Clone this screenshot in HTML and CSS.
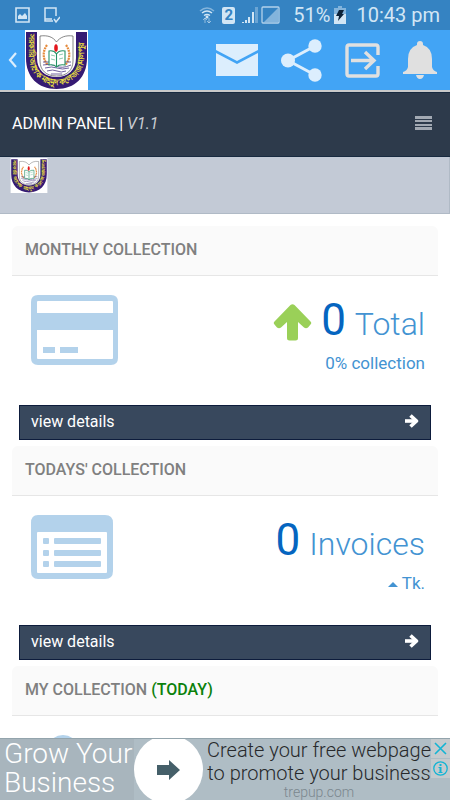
FILE: index.html
```html
<!DOCTYPE html>
<html lang="en">
<head>
<meta charset="utf-8">
<meta name="viewport" content="width=device-width, initial-scale=1">
<title>Admin Panel</title>
<link rel="stylesheet" href="styles.css">
</head>
<body>
<svg class="defs" aria-hidden="true">
  <defs>
    <path id="crest-arc" d="M4 4V28A27.500 27 0 0 0 59 28V3"/>
    <symbol id="crest" viewBox="0 0 63 60">
      <path fill="#fff" d="M0 0h63v60H0z"/>
      <path fill="#351a73" d="M1 2h11v26c0 12 8 19 19.500 19S51 40 51 28V2h11v26c0 19-12 31-30.500 31S1 47 1 28z"/>
      <path fill="#fff" stroke="#555" stroke-width=".7" d="M15 6c8-1 13 1 16.500 6C35 7 41 5 48 6v25c0 9-6 15-16.500 15S15 40 15 31z"/>
      <path fill="none" stroke="#e58a3c" stroke-width="2.200" stroke-dasharray="2 .7" d="M22 15c-5 7-4 15 1 20M41 15c5 7 4 15-1 20"/>
      <path fill="none" stroke="#4b3a86" stroke-width=".8" d="M18 32h8m11 0h9M18 35q7-2 13 1t15-1M20 38q7-2 12 0t12 0M22 41q6-2 10 0t9 0M26 44h11"/>
      <path fill="#fff" stroke="#259064" stroke-width="1.100" d="M24 21q5-1 7.500 3Q34 20 40 21v14q-6-1-8.500 2Q29 34 24 35zM31.500 24v13"/>
      <path stroke="#5bb58d" stroke-width=".7" d="M26 25l4 1m-4 3l4 1m4-5l4-1m-4 5l4-1"/>
      <ellipse fill="#e3161c" cx="31" cy="18" rx="1.800" ry="3.800"/>
      <text class="crest-text"><textPath href="#crest-arc" startOffset="0">সরকারি আশেক মাহমুদ কলেজ জামালপুর</textPath></text>
    </symbol>
    <symbol id="arrow-right" viewBox="0 0 14 14">
      <path fill="none" stroke="currentColor" stroke-width="3.600" d="M0 7h11"/>
      <path fill="none" stroke="currentColor" stroke-width="3.600" stroke-linejoin="round" d="M5.500 1.500L11.500 7l-6 5.500"/>
    </symbol>
  </defs>
</svg>

<div class="status-bar">
  <div class="status-left">
    <svg width="15" height="16" viewBox="0 0 15 16"><path fill="none" stroke="currentColor" stroke-width="1.600" d="M1 1h13v14H1z"/><path fill="currentColor" d="M3 12V9l2-2 2 2 3-3 2 3v3z"/></svg>
    <svg width="16" height="17" viewBox="0 0 16 17"><path fill="none" stroke="currentColor" stroke-width="1.500" d="M12 9V1H1v13h8M1 12h7M10 12l2 3 4-5"/></svg>
  </div>
  <div class="status-right">
    <svg width="16" height="18" viewBox="0 0 16 18"><path fill="none" stroke="currentColor" stroke-width="1.500" d="M1 5q7-6 14 0" opacity=".5"/><path fill="none" stroke="currentColor" stroke-width="1.500" d="M3 7q5-4 10 0M5 9.500q3-2 6 0"/><circle fill="currentColor" cx="8" cy="11" r="1.500"/><path fill="none" stroke="currentColor" opacity=".6" d="M6 17v-5m-2 2l2-2 2 2m2-2v5m-2-2l2 2 2-2"/></svg>
    <span class="sim">2</span>
    <svg width="38" height="18" viewBox="0 0 38 18"><path fill="currentColor" d="M0 16h2v1H0zM3 14h2v3H3zM6 11h2v6H6zM10 6h2v11h-2z"/><path fill="currentColor" opacity=".35" d="M13 1h3v16h-3z"/><rect x="20" y="1" width="17" height="16" rx="1" fill="none" stroke="currentColor" stroke-width="1.300" opacity=".8"/><path fill="currentColor" opacity=".5" d="M36 2v14H22z"/></svg>
    <span class="percent">51%</span>
    <svg width="12" height="18" viewBox="0 0 12 18"><path fill="currentColor" opacity=".5" d="M4 0h4v2h4v8H0V2h4z"/><path fill="currentColor" d="M0 8h12v10H0z"/><path fill="#0c2238" d="M5 4h5L8 8h2l-6 7 1-5H2z"/></svg>
    <span class="clock">10:43 pm</span>
  </div>
</div>

<header class="app-bar">
  <button class="icon-button back" aria-label="Back"><svg width="9" height="16" viewBox="0 0 9 16"><path fill="none" stroke="currentColor" stroke-width="2.200" d="M8 1L2 8l6 7"/></svg></button>
  <svg class="app-logo" role="img" aria-label="College crest"><use href="#crest"/></svg>
  <nav class="app-actions">
    <button class="icon-button" aria-label="Mail"><svg width="42" height="32" viewBox="0 0 42 32"><path fill="currentColor" d="M0 0h42v6L21 17 0 6zM0 9l21 11L42 9v23H0z"/></svg></button>
    <button class="icon-button" aria-label="Share"><svg width="41" height="43" viewBox="0 0 41 43"><path fill="none" stroke="currentColor" stroke-width="3" d="M34 7L7 21.500 34 36"/><g fill="currentColor"><circle cx="34" cy="7" r="6.700"/><circle cx="7" cy="21.500" r="7"/><circle cx="34" cy="36" r="6.700"/></g></svg></button>
    <button class="icon-button grey" aria-label="Log out"><svg width="35" height="35" viewBox="0 0 35 35"><path fill="none" stroke="currentColor" stroke-width="3.400" d="M33 12V4q0-2-2-2H4Q2 2 2 4v27q0 2 2 2h27q2 0 2-2v-8M6 17.500h23M20 9l9 8.500-9 8.500"/></svg></button>
    <button class="icon-button grey" aria-label="Notifications"><svg width="34" height="38" viewBox="0 0 34 38"><path fill="currentColor" d="M14 3a3 3 0 0 1 6 0v1q9 3 9 14v8q1 4 5 5v2H0v-2q4-1 5-5v-8Q5 7 14 4zM13 34h8q-1 4-4 4t-4-4z"/></svg></button>
  </nav>
</header>

<div class="panel-bar">
  <h1>ADMIN PANEL | <em>V1.1</em></h1>
  <button class="icon-button menu" aria-label="Menu"><svg width="17" height="14" viewBox="0 0 17 14"><path fill="currentColor" d="M0 0h17v3H0zM0 4h17v2H0zM0 8h17v2H0zM0 11h17v3H0z"/></svg></button>
</div>
<div class="sub-bar"><svg class="sub-logo" role="img" aria-label="College crest"><use href="#crest"/></svg></div>

<main>
  <section class="card">
    <h2>MONTHLY COLLECTION</h2>
    <div class="card-body">
      <svg width="88" height="70" viewBox="0 0 88 70"><path fill="#b3d2eb" fill-rule="evenodd" d="M7 0h73q7 0 7 7v56q0 7-7 7H7q-7 0-7-7V7q0-7 7-7zM7 6q-1 0-1 1v11h76V7q0-1-1-1zM6 35v28q0 1 1 1h74q1 0 1-1V35zM12 52h12v6H12zM29 52h18v6H29z"/></svg>
      <div class="figures">
        <p class="headline"><svg class="up" width="39" height="37" viewBox="0 0 39 37"><path fill="#9ad058" d="M17.500 1q2-1.500 4 0L37.500 17.500q1.500 1.500 0 3L35 23.500q-2 1.500-4 0L25 18v16q0 2.500-2.500 2.500h-6Q14 36.500 14 34V18l-6 5.500q-2 1.500-4 0l-2.500-3q-1.500-1.500 0-3z"/></svg><strong>0</strong> Total</p>
        <p class="detail">0% collection</p>
      </div>
    </div>
    <a class="view" href="#monthly">view details <svg width="14" height="14"><use href="#arrow-right"/></svg></a>
  </section>
  <section class="card">
    <h2>TODAYS' COLLECTION</h2>
    <div class="card-body">
      <svg width="82" height="64" viewBox="0 0 82 64"><path fill="#b3d2eb" fill-rule="evenodd" d="M7 0h67q8 0 8 8v48q0 8-8 8H7q-7 0-7-8V8q0-8 7-8zM7 17q-1 0-1 1v39q0 1 1 1h68q1 0 1-1V18q0-1-1-1z"/><g fill="#b3d2eb"><rect x="12" y="23" width="6" height="6" rx="1"/><rect x="12" y="35" width="6" height="6" rx="1"/><rect x="12" y="46" width="6" height="6" rx="1"/><rect x="23" y="23" width="47" height="6" rx="1"/><rect x="23" y="35" width="47" height="6" rx="1"/><rect x="23" y="46" width="47" height="6" rx="1"/></g></svg>
      <div class="figures">
        <p class="headline"><strong>0</strong> Invoices</p>
        <p class="detail"><svg class="caret" width="10" height="5" viewBox="0 0 10 5"><path fill="currentColor" d="M5 0l5 5H0z"/></svg> Tk.</p>
      </div>
    </div>
    <a class="view" href="#today">view details <svg width="14" height="14"><use href="#arrow-right"/></svg></a>
  </section>
  <section class="card">
    <h2>MY COLLECTION <span class="today">(TODAY)</span></h2>
    <div class="card-body">
      <svg width="64" height="64" viewBox="0 0 64 64"><circle fill="#b3d2eb" cx="32" cy="16" r="16"/><path fill="#b3d2eb" d="M4 64V48q0-12 14-14h28q14 2 14 14v16z"/></svg>
    </div>
  </section>
</main>

<aside class="ad">
  <p class="ad-title">Grow Your Business</p>
  <a class="ad-go" href="#ad" aria-label="Open advertisement"><svg width="23" height="20" viewBox="0 0 23 20"><path fill="#455f69" d="M0 5h12V0l11 10-11 10v-5H0z"/></svg></a>
  <div class="ad-copy"><p>Create your free webpage<br>to promote your business</p><small>trepup.com</small></div>
  <div class="ad-controls">
    <button aria-label="Close ad"><svg width="13" height="13" viewBox="0 0 13 13"><path stroke="currentColor" stroke-width="1.600" d="M1 1l11 11M12 1L1 12"/></svg></button>
    <button aria-label="Ad information"><svg width="15" height="15" viewBox="0 0 15 15"><circle fill="none" stroke="currentColor" stroke-width="1.300" cx="7.500" cy="7.500" r="6.700"/><path fill="currentColor" d="M6.500 3h2v2h-2zM5.500 6h3v5h1v1h-4v-1h1V7h-1z"/></svg></button>
  </div>
</aside>
</body>
</html>
```

FILE: styles.css
```css
* { box-sizing: border-box; }

body {
  margin: 0;
  height: 100vh;
  display: flex;
  flex-direction: column;
  overflow: hidden;
  background: #fff;
  font-family: Roboto, "Noto Sans", sans-serif;
  font-size: 16px;
}

h1, h2, p { margin: 0; }
svg { display: block; flex: none; }
button { border: 0; padding: 0; background: none; color: inherit; }
.defs { position: absolute; width: 0; height: 0; }
.crest-text { fill: #f0e43c; font-size: 8px; font-weight: 700; }

.status-bar {
  flex: none;
  height: 30px;
  padding: 0 10px 0 15px;
  display: flex;
  align-items: center;
  justify-content: space-between;
  background: #3583c2;
  color: #d2e6f5;
  font-size: 20px;
}
.status-left { display: flex; gap: 14px; }
.status-right { display: flex; align-items: center; gap: 7px; }
.sim {
  width: 13px;
  height: 17px;
  border-radius: 2px;
  background: #d2e6f5;
  color: #3583c2;
  font-size: 15px;
  font-weight: 700;
  line-height: 17px;
  text-align: center;
}
.percent { margin-left: 6px; margin-right: -3px; }
.clock { margin-left: 3px; }

.app-bar {
  flex: none;
  height: 62px;
  padding: 0 13px 0 8px;
  display: flex;
  align-items: center;
  background: #42a4f5;
  border-bottom: 2px solid #c9c9c9;
  color: #dceefd;
}
.app-logo { width: 63px; height: 60px; margin-left: 8px; }
.app-actions { margin-left: auto; display: flex; align-items: center; gap: 23px; }
.grey { color: #e0e0e0; }

.panel-bar {
  flex: none;
  height: 65px;
  padding: 0 18px 3px 12px;
  display: flex;
  align-items: center;
  justify-content: space-between;
  background: #2d3a4b;
  border-top: 1px solid #182a40;
  border-bottom: 1px solid #182a40;
  color: #fff;
}
.panel-bar h1 { font-size: 16px; font-weight: 400; }
.panel-bar em { color: #c8ccd2; }
.menu { color: #a2a9b3; }

.sub-bar {
  flex: none;
  height: 57px;
  padding: 1px 10px;
  background: #c3cad6;
  border: solid #b0bac6;
  border-width: 0 1px 1px 0;
}
.sub-logo { width: 38px; height: 35px; }

main {
  flex: 1;
  min-height: 0;
  overflow: hidden;
  padding: 12px 12px 0;
  display: flex;
  flex-direction: column;
  gap: 6px;
}
.card { flex: none; }
.card h2 {
  height: 50px;
  padding: 0 13px;
  background: #fafafa;
  border-bottom: 1px solid #e6e6e6;
  border-radius: 6px 6px 0 0;
  color: #808080;
  font-size: 16px;
  font-weight: 500;
  line-height: 47px;
}
.card .today { color: #0b810b; }
.card-body {
  min-height: 129px;
  padding: 19px 13px 0 19px;
  display: flex;
  justify-content: space-between;
  align-items: flex-start;
}
.figures { color: #4393d2; text-align: right; }
.headline {
  display: flex;
  align-items: baseline;
  justify-content: flex-end;
  gap: 9px;
  font-size: 32px;
  font-weight: 300;
  line-height: 50px;
}
.headline strong { color: #0565c0; font-size: 44px; font-weight: 400; }
.up { align-self: center; }
.detail { font-size: 17px; line-height: 29px; }
.caret { display: inline-block; vertical-align: middle; }
.view {
  height: 35px;
  margin: 0 7px;
  padding: 0 11px 3px;
  display: flex;
  align-items: center;
  justify-content: space-between;
  background: #38485d;
  border: 1px solid #0d1c3c;
  color: #fff;
  text-decoration: none;
}

.ad {
  flex: none;
  height: 62px;
  display: flex;
  background: #afbdc5;
  border-top: 1px solid #93a4ac;
  overflow: hidden;
}
.ad-title {
  width: 134px;
  flex: none;
  padding-left: 4px;
  background: #a8b5bd;
  color: #fff;
  font-size: 28px;
  font-weight: 300;
  line-height: 29px;
}
.ad-go {
  flex: none;
  width: 69px;
  height: 69px;
  align-self: center;
  border-radius: 50%;
  display: grid;
  place-items: center;
  background: #fff;
}
.ad-copy {
  flex: 1;
  padding-left: 4px;
  color: #27292b;
  font-size: 20px;
  font-weight: 300;
  line-height: 23px;
  text-align: center;
  white-space: nowrap;
}
.ad-copy small { display: block; color: #7b878e; font-size: 14px; line-height: 14px; }
.ad-controls { flex: none; width: 19px; display: flex; flex-direction: column; gap: 1px; color: #12b4d4; }
.ad-controls button { height: 19px; display: grid; place-items: center; background: #c5cacd; }
```
